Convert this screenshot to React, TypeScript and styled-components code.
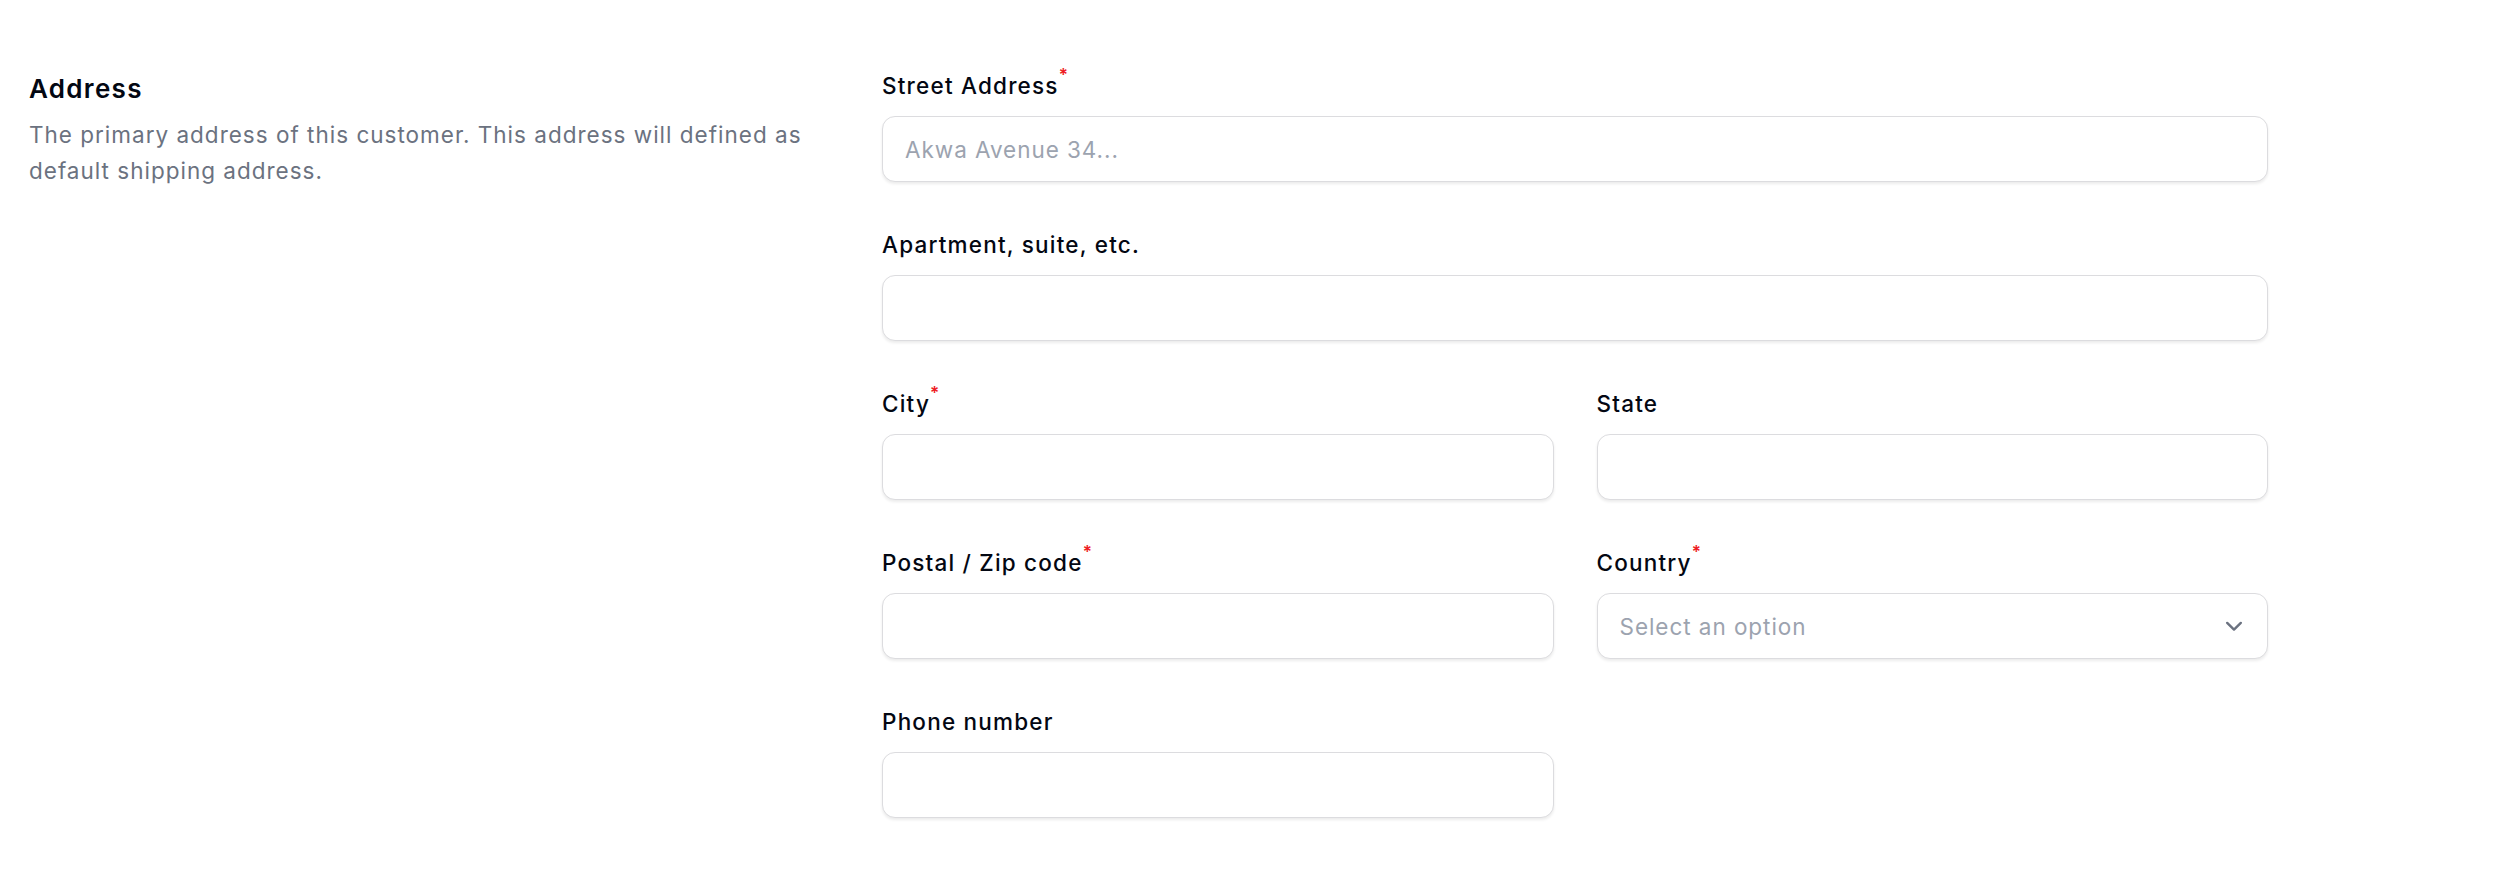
import React from "react";
import styled, { createGlobalStyle } from "styled-components";

const GlobalStyle = createGlobalStyle`
  html, body {
    margin: 0;
    padding: 0;
    background: #ffffff;
  }
  body {
    font-family: Inter, "Noto Sans", "Liberation Sans", sans-serif;
    color: #030712;
    -webkit-font-smoothing: antialiased;
  }
  * { box-sizing: border-box; }
`;

const Page = styled.div`
  display: grid;
  grid-template-columns: 805px 1386px;
  column-gap: 48px;
  padding: 69px 0 0 29px;
  width: 2500px;
  height: 882px;
  background: #fff;
`;

const Aside = styled.div`
  display: flex;
  flex-direction: column;
  gap: 8px;
`;

const Heading = styled.h2`
  margin: 0;
  font-size: 26px;
  line-height: 40px;
  font-weight: 600;
  color: #030712;
  letter-spacing: 1.3px;
`;

const Description = styled.p`
  margin: 0;
  font-size: 22.5px;
  line-height: 36px;
  font-weight: 400;
  color: #6b7280;
  letter-spacing: 1px;
`;

const FormGrid = styled.div`
  display: grid;
  grid-template-columns: 1fr 1fr;
  column-gap: 43px;
  row-gap: 46px;
  align-content: start;
`;

const Field = styled.div<{ $full?: boolean }>`
  display: flex;
  flex-direction: column;
  gap: 14px;
  grid-column: ${(p) => (p.$full ? "1 / -1" : "auto")};
`;

const Label = styled.label`
  font-size: 22.5px;
  line-height: 33px;
  font-weight: 500;
  color: #030712;
  letter-spacing: 1.2px;
`;

const Required = styled.sup`
  color: #ee1c24;
  font-size: 17px;
  font-weight: 600;
  margin-left: 0;
  vertical-align: top;
  line-height: 17px;
  position: relative;
  top: -2px;
`;

const boxStyles = `
  height: 66px;
  width: 100%;
  border-radius: 13px;
  border: 1.5px solid #dcdcdf;
  background: #ffffff;
  box-shadow: 0 2px 3px rgba(0, 0, 0, 0.08);
  padding: 0 22px;
  font-family: Inter, "Noto Sans", "Liberation Sans", sans-serif;
  font-size: 22.5px;
  letter-spacing: 0.95px;
  color: #030712;
`;

const TextInput = styled.input`
  ${boxStyles}
  outline: none;
  &::placeholder {
    color: #9ca3af;
  }
`;

const SelectBox = styled.div`
  ${boxStyles}
  display: flex;
  align-items: center;
  justify-content: space-between;
  padding-right: 22px;
  cursor: pointer;
`;

const SelectPlaceholder = styled.span`
  color: #9ca3af;
`;

const Chevron = () => (
  <svg width="22" height="22" viewBox="0 0 20 20" fill="none">
    <path
      d="M3.8 7.2 L10 13.2 L16.2 7.2"
      stroke="#6b7280"
      strokeWidth="2.2"
      strokeLinecap="round"
      strokeLinejoin="round"
    />
  </svg>
);

type FieldDef = {
  label: string;
  required?: boolean;
  full?: boolean;
  placeholder?: string;
  select?: boolean;
};

const fields: FieldDef[] = [
  { label: "Street Address", required: true, full: true, placeholder: "Akwa Avenue 34..." },
  { label: "Apartment, suite, etc.", full: true },
  { label: "City", required: true },
  { label: "State" },
  { label: "Postal / Zip code", required: true },
  { label: "Country", required: true, select: true, placeholder: "Select an option" },
  { label: "Phone number" },
];

export default function App() {
  return (
    <>
      <GlobalStyle />
      <Page>
        <Aside>
          <Heading>Address</Heading>
          <Description>
            The primary address of this customer. This address will defined as default shipping address.
          </Description>
        </Aside>
        <FormGrid>
          {fields.map((f) => (
            <Field key={f.label} $full={f.full}>
              <Label>
                {f.label}
                {f.required && <Required>*</Required>}
              </Label>
              {f.select ? (
                <SelectBox>
                  <SelectPlaceholder>{f.placeholder}</SelectPlaceholder>
                  <Chevron />
                </SelectBox>
              ) : (
                <TextInput type="text" placeholder={f.placeholder ?? ""} />
              )}
            </Field>
          ))}
        </FormGrid>
      </Page>
    </>
  );
}
